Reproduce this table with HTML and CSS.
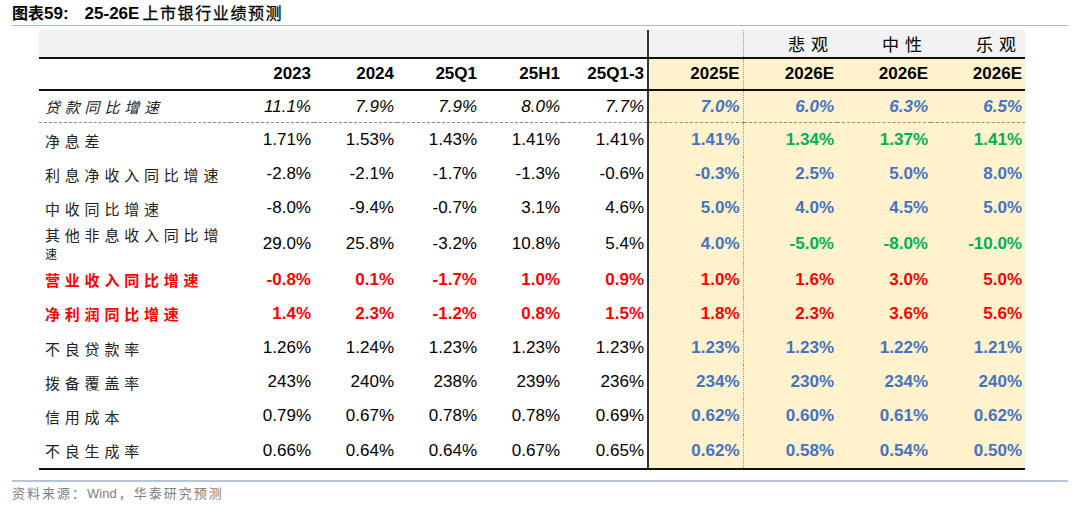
FILE: index.html
```html
<!DOCTYPE html>
<html lang="zh-CN">
<head>
<meta charset="utf-8">
<title>25-26E上市银行业绩预测</title>
<link rel="stylesheet" href="styles.css">
</head>
<body>
<div class="page">
  <div class="title">
    <span class="t-cjk">图表</span><span class="t-num">59:</span><span class="t-num t-gap">25-26E</span><span class="t-cjk t-rest">上市银行业绩预测</span>
  </div>
  <table class="tbl">
    <colgroup>
      <col class="c-label"><col class="c-h"><col class="c-h"><col class="c-h"><col class="c-h"><col class="c-h5">
      <col class="c-f1"><col class="c-f"><col class="c-f"><col class="c-f">
    </colgroup>
    <thead>
      <tr class="r-scen">
        <th></th><th></th><th></th><th></th><th></th><th></th>
        <th class="v1"></th><th class="v2 scen">悲观</th><th class="scen">中性</th><th class="scen">乐观</th>
      </tr>
      <tr class="r-year">
        <th></th><th>2023</th><th>2024</th><th>25Q1</th><th>25H1</th><th>25Q1-3</th>
        <th class="v1 y">2025E</th><th class="v2 y">2026E</th><th class="y">2026E</th><th class="y">2026E</th>
      </tr>
    </thead>
    <tbody>
      <tr class="r-loan">
        <td class="lab">贷款同比增速</td><td>11.1%</td><td>7.9%</td><td>7.9%</td><td>8.0%</td><td>7.7%</td>
        <td class="v1 y b">7.0%</td><td class="v2 y b">6.0%</td><td class="y b">6.3%</td><td class="y b">6.5%</td>
      </tr>
      <tr>
        <td class="lab">净息差</td><td>1.71%</td><td>1.53%</td><td>1.43%</td><td>1.41%</td><td>1.41%</td>
        <td class="v1 y b">1.41%</td><td class="v2 y g">1.34%</td><td class="y g">1.37%</td><td class="y g">1.41%</td>
      </tr>
      <tr>
        <td class="lab">利息净收入同比增速</td><td>-2.8%</td><td>-2.1%</td><td>-1.7%</td><td>-1.3%</td><td>-0.6%</td>
        <td class="v1 y b">-0.3%</td><td class="v2 y b">2.5%</td><td class="y b">5.0%</td><td class="y b">8.0%</td>
      </tr>
      <tr>
        <td class="lab">中收同比增速</td><td>-8.0%</td><td>-9.4%</td><td>-0.7%</td><td>3.1%</td><td>4.6%</td>
        <td class="v1 y b">5.0%</td><td class="v2 y b">4.0%</td><td class="y b">4.5%</td><td class="y b">5.0%</td>
      </tr>
      <tr>
        <td class="lab lab2">其他非息收入同比增<br><span class="wrap">速</span></td><td>29.0%</td><td>25.8%</td><td>-3.2%</td><td>10.8%</td><td>5.4%</td>
        <td class="v1 y b">4.0%</td><td class="v2 y g">-5.0%</td><td class="y g">-8.0%</td><td class="y g">-10.0%</td>
      </tr>
      <tr class="r-red">
        <td class="lab">营业收入同比增速</td><td>-0.8%</td><td>0.1%</td><td>-1.7%</td><td>1.0%</td><td>0.9%</td>
        <td class="v1 y">1.0%</td><td class="v2 y">1.6%</td><td class="y">3.0%</td><td class="y">5.0%</td>
      </tr>
      <tr class="r-red">
        <td class="lab">净利润同比增速</td><td>1.4%</td><td>2.3%</td><td>-1.2%</td><td>0.8%</td><td>1.5%</td>
        <td class="v1 y">1.8%</td><td class="v2 y">2.3%</td><td class="y">3.6%</td><td class="y">5.6%</td>
      </tr>
      <tr>
        <td class="lab">不良贷款率</td><td>1.26%</td><td>1.24%</td><td>1.23%</td><td>1.23%</td><td>1.23%</td>
        <td class="v1 y b">1.23%</td><td class="v2 y b">1.23%</td><td class="y b">1.22%</td><td class="y b">1.21%</td>
      </tr>
      <tr>
        <td class="lab">拨备覆盖率</td><td>243%</td><td>240%</td><td>238%</td><td>239%</td><td>236%</td>
        <td class="v1 y b">234%</td><td class="v2 y b">230%</td><td class="y b">234%</td><td class="y b">240%</td>
      </tr>
      <tr>
        <td class="lab">信用成本</td><td>0.79%</td><td>0.67%</td><td>0.78%</td><td>0.78%</td><td>0.69%</td>
        <td class="v1 y b">0.62%</td><td class="v2 y b">0.60%</td><td class="y b">0.61%</td><td class="y b">0.62%</td>
      </tr>
      <tr class="r-last">
        <td class="lab">不良生成率</td><td>0.66%</td><td>0.64%</td><td>0.64%</td><td>0.67%</td><td>0.65%</td>
        <td class="v1 y b">0.62%</td><td class="v2 y b">0.58%</td><td class="y b">0.54%</td><td class="y b">0.50%</td>
      </tr>
    </tbody>
  </table>
  <div class="source">资料来源：<span class="src-num">Wind</span>，华泰研究预测</div>
</div>
</body>
</html>
```

FILE: styles.css
```css
html, body {
  margin: 0;
  padding: 0;
  background: #ffffff;
}

.page {
  width: 1056px;
  padding: 0 12px;
  font-family: "Liberation Sans", Arial, "Noto Sans CJK SC", sans-serif;
  color: #000;
}

.title {
  height: 25px;
  line-height: 25px;
  border-bottom: 1px solid #a3bbd8;
  font-weight: bold;
  font-size: 17px;
  white-space: nowrap;
}

.t-cjk {
  font-family: "Noto Sans CJK SC", sans-serif;
  font-size: 16px;
  font-weight: bold;
}

.t-rest {
  font-weight: normal;
  -webkit-text-stroke: 0.3px #000;
  letter-spacing: 1.6px;
  margin-left: 3px;
}

.t-num {
  font-family: "Liberation Sans", Arial, sans-serif;
  font-size: 17px;
}

.t-gap {
  margin-left: 16px;
}

.tbl {
  margin: 4px 0 0 27px;
  border-collapse: collapse;
  table-layout: fixed;
  width: 986px;
}

.c-label { width: 192px; }
.c-h { width: 83px; }
.c-h5 { width: 85px; }
.c-f1 { width: 95px; }
.c-f { width: 94px; }

.tbl th, .tbl td {
  padding: 0 3px 0 0;
  text-align: right;
  font-size: 17px;
  white-space: nowrap;
  overflow: visible;
}

.tbl th {
  font-weight: bold;
}

.r-scen th {
  background: #f2f2f2;
  height: 27px;
  border-bottom: 2px solid #111;
}

.scen {
  font-family: "Noto Sans CJK SC", sans-serif;
  font-weight: normal !important;
  font-size: 19px;
  letter-spacing: 6px;
  padding-right: 3px !important;
}

.r-year th {
  height: 30px;
  border-bottom: 2px solid #111;
}

.tbl td {
  height: 34.2px;
}

.r-loan td {
  height: 31px;
  font-style: italic;
  border-bottom: 1px dashed #8c8c8c;
}

.r-last td {
  border-bottom: 2px solid #111;
}

.y {
  background: #fff2cc;
}

.v1 {
  border-left: 2px solid #333;
}

.v2 {
  border-left: 1px dotted #9a9a9a;
}

.lab {
  text-align: left !important;
  padding-left: 6px !important;
  font-family: "Noto Sans CJK SC", sans-serif;
  font-size: 15px !important;
  letter-spacing: 4.8px;
  color: #222;
}

.lab2 {
  line-height: 18px;
  white-space: normal;
}

.wrap {
  font-size: 12px;
}

.b {
  color: #4472c4;
  font-weight: bold;
}

.g {
  color: #00b050;
  font-weight: bold;
}

.r-red td {
  color: #ff0000;
  font-weight: bold;
}

.r-red .lab {
  color: #ff0000;
}

.source {
  margin-top: 10px;
  border-top: 2px solid #b5c4d8;
  padding-top: 2px;
  font-family: "Noto Sans CJK SC", sans-serif;
  font-size: 13px;
  letter-spacing: 2px;
  color: #808080;
  line-height: 18px;
}

.src-num {
  font-family: "Liberation Sans", Arial, sans-serif;
  letter-spacing: 0;
  margin-right: 2px;
}
```
